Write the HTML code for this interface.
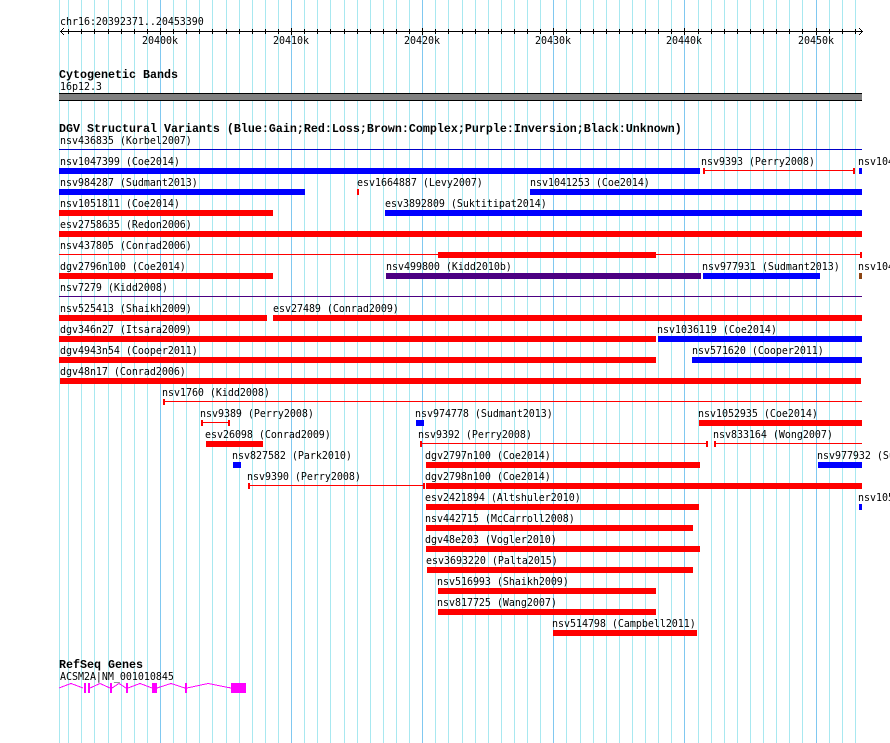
<!DOCTYPE html>
<html><head><meta charset="utf-8"><style>
html,body{margin:0;padding:0;background:#fff}
svg{display:block}
text{font-family:"DejaVu Sans Mono",monospace;font-size:10px;letter-spacing:-.02px;fill:#000;white-space:pre}
text.b{font-family:"Liberation Mono",monospace;font-weight:bold;font-size:11.67px;letter-spacing:0}
</style></head><body>
<svg xmlns="http://www.w3.org/2000/svg" width="890" height="743" viewBox="0 0 890 743">
<rect width="890" height="743" fill="#fff"/>
<g shape-rendering="crispEdges">
<g fill="#a8e8f0">
<rect x="59" width="1" height="743"/><rect x="68" width="1" height="743"/><rect x="81" width="1" height="743"/><rect x="94" width="1" height="743"/><rect x="108" width="1" height="743"/><rect x="121" width="1" height="743"/><rect x="134" width="1" height="743"/><rect x="147" width="1" height="743"/><rect x="173" width="1" height="743"/><rect x="186" width="1" height="743"/><rect x="199" width="1" height="743"/><rect x="212" width="1" height="743"/><rect x="226" width="1" height="743"/><rect x="239" width="1" height="743"/><rect x="252" width="1" height="743"/><rect x="265" width="1" height="743"/><rect x="278" width="1" height="743"/><rect x="304" width="1" height="743"/><rect x="317" width="1" height="743"/><rect x="330" width="1" height="743"/><rect x="344" width="1" height="743"/><rect x="357" width="1" height="743"/><rect x="370" width="1" height="743"/><rect x="383" width="1" height="743"/><rect x="396" width="1" height="743"/><rect x="409" width="1" height="743"/><rect x="435" width="1" height="743"/><rect x="448" width="1" height="743"/><rect x="462" width="1" height="743"/><rect x="475" width="1" height="743"/><rect x="488" width="1" height="743"/><rect x="501" width="1" height="743"/><rect x="514" width="1" height="743"/><rect x="527" width="1" height="743"/><rect x="540" width="1" height="743"/><rect x="566" width="1" height="743"/><rect x="580" width="1" height="743"/><rect x="593" width="1" height="743"/><rect x="606" width="1" height="743"/><rect x="619" width="1" height="743"/><rect x="632" width="1" height="743"/><rect x="645" width="1" height="743"/><rect x="658" width="1" height="743"/><rect x="671" width="1" height="743"/><rect x="698" width="1" height="743"/><rect x="711" width="1" height="743"/><rect x="724" width="1" height="743"/><rect x="737" width="1" height="743"/><rect x="750" width="1" height="743"/><rect x="763" width="1" height="743"/><rect x="776" width="1" height="743"/><rect x="789" width="1" height="743"/><rect x="802" width="1" height="743"/><rect x="829" width="1" height="743"/><rect x="842" width="1" height="743"/><rect x="855" width="1" height="743"/>
</g>
<g fill="#80c8f0">
<rect x="160" width="1" height="743"/><rect x="291" width="1" height="743"/><rect x="422" width="1" height="743"/><rect x="553" width="1" height="743"/><rect x="684" width="1" height="743"/><rect x="816" width="1" height="743"/>
</g>
<!-- axis -->
<rect x="60" y="31" width="802" height="1" fill="#000"/>
<path d="M68 29v5M81 29v5M94 29v5M108 29v5M121 29v5M134 29v5M147 29v5M173 29v5M186 29v5M199 29v5M212 29v5M226 29v5M239 29v5M252 29v5M265 29v5M278 29v5M304 29v5M317 29v5M330 29v5M344 29v5M357 29v5M370 29v5M383 29v5M396 29v5M409 29v5M435 29v5M448 29v5M462 29v5M475 29v5M488 29v5M501 29v5M514 29v5M527 29v5M540 29v5M566 29v5M580 29v5M593 29v5M606 29v5M619 29v5M632 29v5M645 29v5M658 29v5M671 29v5M698 29v5M711 29v5M724 29v5M737 29v5M750 29v5M763 29v5M776 29v5M789 29v5M802 29v5M829 29v5M842 29v5M855 29v5M160 28v7M291 28v7M422 28v7M553 28v7M684 28v7M816 28v7" transform="translate(.5 0)" stroke="#000" stroke-width="1" fill="none"/>
<path d="M60 31h1v1h-1zM61 30h1v1h-1zM61 32h1v1h-1zM62 29h1v1h-1zM62 33h1v1h-1zM63 28h1v1h-1zM63 34h1v1h-1zM862 31h1v1h-1zM861 30h1v1h-1zM861 32h1v1h-1zM860 29h1v1h-1zM860 33h1v1h-1zM859 28h1v1h-1zM859 34h1v1h-1z" fill="#000"/>
<!-- band -->
<rect x="59" y="93" width="803" height="8" fill="#000"/>
<rect x="59" y="94" width="803" height="6" fill="#808080"/>

<!-- r0 -->
<rect x="59" y="149" width="803" height="1" fill="#0000c8"/>
<!-- blue bars -->
<g fill="#0000ff">
<rect x="59" y="168" width="641" height="6"/><rect x="859" y="168" width="3" height="6"/>
<rect x="59" y="189" width="246" height="6"/><rect x="530" y="189" width="332" height="6"/>
<rect x="385" y="210" width="477" height="6"/>
<rect x="703" y="273" width="117" height="6"/>
<rect x="658" y="336" width="204" height="6"/>
<rect x="692" y="357" width="170" height="6"/>
<rect x="416" y="420" width="8" height="6"/>
<rect x="233" y="462" width="8" height="6"/>
<rect x="818" y="462" width="44" height="6"/>
<rect x="859" y="504" width="3" height="6"/>
</g>
<g fill="#ff0000">
<rect x="703" y="170" width="152" height="1"/><rect x="703" y="168" width="2" height="6"/><rect x="853" y="168" width="2" height="6"/>
<rect x="357" y="189" width="2" height="6"/>
<rect x="59" y="210" width="214" height="6"/>
<rect x="59" y="231" width="803" height="6"/>
<rect x="59" y="254" width="803" height="1"/><rect x="438" y="252" width="218" height="6"/><rect x="860" y="252" width="2" height="6"/>
<rect x="59" y="273" width="214" height="6"/>
<rect x="59" y="315" width="208" height="6"/><rect x="273" y="315" width="589" height="6"/>
<rect x="59" y="336" width="597" height="6"/>
<rect x="59" y="357" width="597" height="6"/>
<rect x="60" y="378" width="801" height="6"/>
<rect x="163" y="401" width="699" height="1"/><rect x="163" y="399" width="2" height="6"/>
<rect x="201" y="422" width="28" height="1"/><rect x="201" y="420" width="2" height="6"/><rect x="228" y="420" width="2" height="6"/>
<rect x="699" y="420" width="163" height="6"/>
<rect x="206" y="441" width="57" height="6"/>
<rect x="420" y="443" width="287" height="1"/><rect x="420" y="441" width="2" height="6"/><rect x="706" y="441" width="2" height="6"/>
<rect x="714" y="443" width="148" height="1"/><rect x="714" y="441" width="2" height="6"/>
<rect x="426" y="462" width="274" height="6"/>
<rect x="249" y="485" width="175" height="1"/><rect x="248" y="483" width="2" height="6"/><rect x="423" y="483" width="2" height="6"/>
<rect x="426" y="483" width="436" height="6"/>
<rect x="426" y="504" width="273" height="6"/>
<rect x="426" y="525" width="267" height="6"/>
<rect x="426" y="546" width="274" height="6"/>
<rect x="427" y="567" width="266" height="6"/>
<rect x="438" y="588" width="218" height="6"/>
<rect x="438" y="609" width="218" height="6"/>
<rect x="553" y="630" width="144" height="6"/>
</g>
<rect x="386" y="273" width="315" height="6" fill="#4b0082"/>
<rect x="859" y="273" width="3" height="6" fill="#8b4513"/>
<rect x="59" y="296" width="803" height="1" fill="#4b0082"/>
<!-- gene exons -->
<g fill="#ff00ff">
<rect x="84" y="683" width="2" height="10"/><rect x="88" y="683" width="2" height="10"/><rect x="110" y="683" width="2" height="10"/><rect x="126" y="683" width="2" height="10"/><rect x="152" y="683" width="5" height="10"/><rect x="185" y="683" width="2" height="10"/><rect x="231" y="683" width="15" height="10"/>
</g>
<g fill="none" stroke="#ff00ff">
<polyline points="59,688 71,683.5 83,688"/>
<polyline points="90,688 100,683.5 110,688"/>
<polyline points="112,688 119,683.5 126,688"/>
<polyline points="128,688 140,683.5 152,688"/>
<polyline points="157,688 171,683.5 185,688"/>
<polyline points="187,688 208,683.5 231,688"/>
</g>
</g>

<g transform="translate(0 25) scale(1 1.08)"><text x="60">chr16:20392371..20453390</text></g>
<g transform="translate(0 44) scale(1 1.08)"><text x="142">20400k</text><text x="273">20410k</text><text x="404">20420k</text><text x="535">20430k</text><text x="666">20440k</text><text x="798">20450k</text></g>
<g transform="translate(0 78) scale(1 1.06)"><text class="b" x="59">Cytogenetic Bands</text></g>
<g transform="translate(0 90) scale(1 1.08)"><text x="60">16p12.3</text></g>
<g transform="translate(0 132) scale(1 1.06)"><text class="b" x="59">DGV Structural Variants (Blue:Gain;Red:Loss;Brown:Complex;Purple:Inversion;Black:Unknown)</text></g>
<g transform="translate(0 144) scale(1 1.08)"><text x="60">nsv436835 (Korbel2007)</text></g>
<g transform="translate(0 165) scale(1 1.08)"><text x="60">nsv1047399 (Coe2014)</text><text x="701">nsv9393 (Perry2008)</text><text x="858">nsv1047</text></g>
<g transform="translate(0 186) scale(1 1.08)"><text x="60">nsv984287 (Sudmant2013)</text><text x="357">esv1664887 (Levy2007)</text><text x="530">nsv1041253 (Coe2014)</text></g>
<g transform="translate(0 207) scale(1 1.08)"><text x="60">nsv1051811 (Coe2014)</text><text x="385">esv3892809 (Suktitipat2014)</text></g>
<g transform="translate(0 228) scale(1 1.08)"><text x="60">esv2758635 (Redon2006)</text></g>
<g transform="translate(0 249) scale(1 1.08)"><text x="60">nsv437805 (Conrad2006)</text></g>
<g transform="translate(0 270) scale(1 1.08)"><text x="60">dgv2796n100 (Coe2014)</text><text x="386">nsv499800 (Kidd2010b)</text><text x="702">nsv977931 (Sudmant2013)</text><text x="858">nsv1047</text></g>
<g transform="translate(0 291) scale(1 1.08)"><text x="60">nsv7279 (Kidd2008)</text></g>
<g transform="translate(0 312) scale(1 1.08)"><text x="60">nsv525413 (Shaikh2009)</text><text x="273">esv27489 (Conrad2009)</text></g>
<g transform="translate(0 333) scale(1 1.08)"><text x="60">dgv346n27 (Itsara2009)</text><text x="657">nsv1036119 (Coe2014)</text></g>
<g transform="translate(0 354) scale(1 1.08)"><text x="60">dgv4943n54 (Cooper2011)</text><text x="692">nsv571620 (Cooper2011)</text></g>
<g transform="translate(0 375) scale(1 1.08)"><text x="60">dgv48n17 (Conrad2006)</text></g>
<g transform="translate(0 396) scale(1 1.08)"><text x="162">nsv1760 (Kidd2008)</text></g>
<g transform="translate(0 417) scale(1 1.08)"><text x="200">nsv9389 (Perry2008)</text><text x="415">nsv974778 (Sudmant2013)</text><text x="698">nsv1052935 (Coe2014)</text></g>
<g transform="translate(0 438) scale(1 1.08)"><text x="205">esv26098 (Conrad2009)</text><text x="418">nsv9392 (Perry2008)</text><text x="713">nsv833164 (Wong2007)</text></g>
<g transform="translate(0 459) scale(1 1.08)"><text x="232">nsv827582 (Park2010)</text><text x="425">dgv2797n100 (Coe2014)</text><text x="817">nsv977932 (Sudmant2013)</text></g>
<g transform="translate(0 480) scale(1 1.08)"><text x="247">nsv9390 (Perry2008)</text><text x="425">dgv2798n100 (Coe2014)</text></g>
<g transform="translate(0 501) scale(1 1.08)"><text x="425">esv2421894 (Altshuler2010)</text><text x="858">nsv1052</text></g>
<g transform="translate(0 522) scale(1 1.08)"><text x="425">nsv442715 (McCarroll2008)</text></g>
<g transform="translate(0 543) scale(1 1.08)"><text x="425">dgv48e203 (Vogler2010)</text></g>
<g transform="translate(0 564) scale(1 1.08)"><text x="426">esv3693220 (Palta2015)</text></g>
<g transform="translate(0 585) scale(1 1.08)"><text x="437">nsv516993 (Shaikh2009)</text></g>
<g transform="translate(0 606) scale(1 1.08)"><text x="437">nsv817725 (Wang2007)</text></g>
<g transform="translate(0 627) scale(1 1.08)"><text x="552">nsv514798 (Campbell2011)</text></g>
<g transform="translate(0 668) scale(1 1.06)"><text class="b" x="59">RefSeq Genes</text></g>
<g transform="translate(0 680) scale(1 1.08)"><text x="60">ACSM2A|NM_001010845</text></g>
</svg>
</body></html>
